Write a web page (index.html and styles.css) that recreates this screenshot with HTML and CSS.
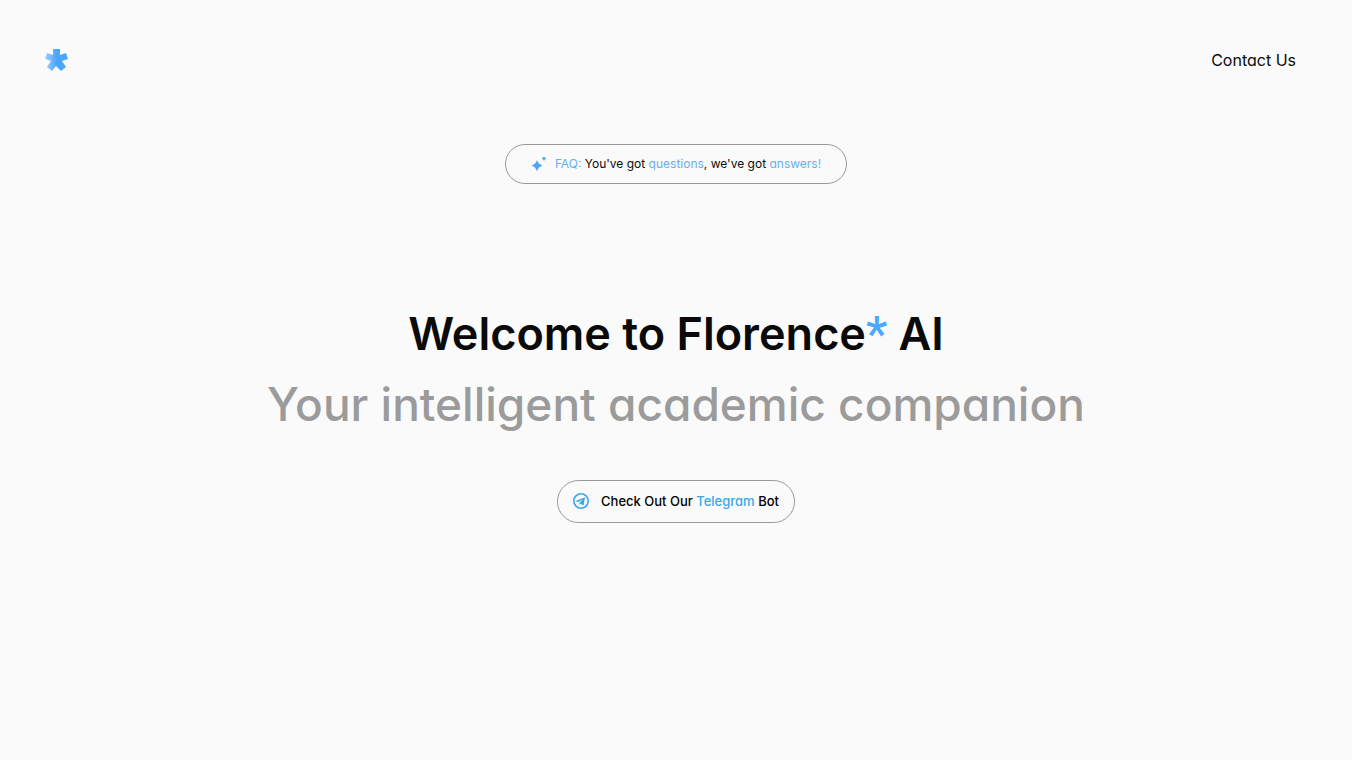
FILE: index.html
```html
<!DOCTYPE html>
<html lang="en">
<head>
    <meta charset="UTF-8">
    <meta name="viewport" content="width=device-width, initial-scale=1.0">
    <title>Florence* AI</title>
    <link rel="stylesheet" href="styles.css">
</head>
<body>
    <header class="header">
        <a href="#" class="logo" aria-label="Florence home">
            <svg width="24" height="24" viewBox="0 0 24 24">
                <defs>
                    <linearGradient id="logoFill" x1="0" y1="0" x2="1" y2="0">
                        <stop offset="0" stop-color="#9dd0ff" />
                        <stop offset="0.5" stop-color="#4ba6fd" />
                        <stop offset="1" stop-color="#4ba6fd" />
                    </linearGradient>
                </defs>
                <path fill="url(#logoFill)" d="M9 1h7v6l6-2 2 6-6 2 4 6-5 4-5-5-4 5-5-4 4-6-6-2 2-6 6 2z" />
            </svg>
        </a>
        <a href="#" class="contact">Contact Us</a>
    </header>

    <main class="main">
        <a href="#" class="pill faq">
            <svg width="16" height="16" viewBox="0 0 16 16" fill="#4ba6fd">
                <path d="M6 4q1 4 5.500 5.500Q7 11 6 15.500 5 11 .5 9.500 5 8 6 4z" />
                <path d="M13 0q.4 2 2.500 2.500Q13.400 3 13 5q-.4-2-2.500-2.500Q12.600 2 13 0z" />
            </svg>
            <span><span class="blue">FAQ:</span> You've got <span class="blue">questions</span>, we've got <span class="blue">answers!</span></span>
        </a>

        <div class="hero">
            <h1 class="title">Welcome to Florence<span class="star">*</span> AI</h1>
            <p class="subtitle">Your intelligent academic companion</p>
        </div>

        <a href="#" class="pill telegram">
            <svg width="16" height="16" viewBox="0 0 16 16">
                <circle cx="8" cy="8" r="7.200" fill="none" stroke="#36a9e6" stroke-width="1.600" />
                <path fill="#36a9e6" d="M12 4.200 3.200 7.700c-.5.200-.5.500 0 .7l2.200.7 4.800-3-3.700 3.700-.1 2.100 1.300-1.100 2.100 1.500c.4.200.7.100.8-.4z" />
            </svg>
            <span>Check Out Our <span class="tg">Telegram</span> Bot</span>
        </a>
    </main>
</body>
</html>
```
FILE: styles.css
```css
body {
    margin: 0;
    background-color: #fafafa;
    color: #0a0a0a;
    font-family: Inter, sans-serif;
    /* single-storey a */
    font-feature-settings: "cv11";
}
a {
    color: inherit;
    text-decoration: none;
}
svg {
    display: block;
    flex-shrink: 0;
}
.header {
    display: flex;
    justify-content: space-between;
    align-items: center;
    padding: 48px 56px 0 44px;
}
.contact {
    font-size: 16px;
    line-height: 24px;
}
.main {
    display: flex;
    flex-direction: column;
    align-items: center;
    padding-top: 72px;
}
.pill {
    display: flex;
    align-items: center;
    box-sizing: border-box;
    border: 1px solid #999;
    border-radius: 24px;
    line-height: 20px;
}
.faq {
    gap: 8px;
    padding: 9px 25px;
    font-size: 12px;
}
.blue {
    color: #68b0ec;
}
.hero {
    padding: 114px 0 40px;
    text-align: center;
}
.title,
.subtitle {
    margin: 0;
    font-size: 46px;
    line-height: 71px;
    font-weight: 450;
}
.title {
    font-size: 45px;
    font-weight: 600;
}
.subtitle {
    color: #9b9b9b;
}
.star {
    font-family: Roboto, sans-serif;
    font-size: 48px;
    line-height: 1;
    font-weight: 500;
    color: #4ba6fd;
}
.telegram {
    gap: 12px;
    padding: 10px 15px 11px;
    font-size: 13px;
    font-weight: 500;
    color: #000;
}
.tg {
    color: #36a9e6;
}
```
